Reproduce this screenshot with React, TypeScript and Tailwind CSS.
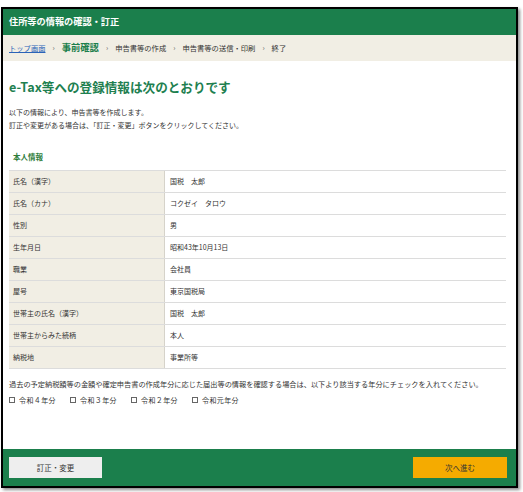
import React from "react";

const rows: [string, string][] = [
  ["氏名（漢字）", "国税　太郎"],
  ["氏名（カナ）", "コクゼイ　タロウ"],
  ["性別", "男"],
  ["生年月日", "昭和43年10月13日"],
  ["職業", "会社員"],
  ["屋号", "東京国税局"],
  ["世帯主の氏名（漢字）", "国税　太郎"],
  ["世帯主からみた続柄", "本人"],
  ["納税地", "事業所等"],
];

const years = ["令和４年分", "令和３年分", "令和２年分", "令和元年分"];

export default function App() {
  return (
    <div
      className="w-[523px] h-[492px] bg-white relative overflow-hidden"
      style={{ fontFamily: '"Noto Sans CJK JP", "Noto Sans", sans-serif' }}
    >
      <div className="ml-[1px] mt-[7px] w-[517px] h-[481px] border-2 border-black bg-white flex flex-col shadow-[2px_2px_3px_rgba(0,0,0,0.45)]">
        {/* Header */}
        <div className="h-[26px] shrink-0 bg-[#1b7f4c] flex items-center px-[6px] text-white text-[9.2px] font-bold">
          住所等の情報の確認・訂正
        </div>
        {/* Breadcrumb */}
        <div className="h-[26px] shrink-0 bg-[#f1eee4] flex items-center px-[6px] text-[7.3px] text-[#333]">
          <span className="text-[#2a63b8] underline">トップ画面</span>
          <span className="mx-[7px] text-[#666]">›</span>
          <span className="text-[9.3px] font-bold text-[#1b7f4c]">事前確認</span>
          <span className="mx-[7px] text-[#666]">›</span>
          <span>申告書等の作成</span>
          <span className="mx-[7px] text-[#666]">›</span>
          <span>申告書等の送信・印刷</span>
          <span className="mx-[7px] text-[#666]">›</span>
          <span>終了</span>
        </div>
        {/* Content */}
        <div className="flex-1 flex flex-col pl-[6px] pr-[10px]">
          <div className="mt-[18px] h-[16px] leading-[16px] text-[12.6px] font-bold text-[#1e8050] whitespace-nowrap">
            e-Tax等への登録情報は次のとおりです
          </div>
          <div className="mt-[11px] text-[7px] leading-[13px] text-[#333]">
            <div>以下の情報により、申告書等を作成します。</div>
            <div>訂正や変更がある場合は、「訂正・変更」ボタンをクリックしてください。</div>
          </div>
          <div className="mt-[19px] h-[12px] leading-[12px] text-[7.5px] font-bold text-[#2d7d3a] pl-[4px]">
            本人情報
          </div>
          <div className="mt-[7px] border-t border-[#dcdcdc]">
            {rows.map(([k, v]) => (
              <div key={k} className="flex h-[22px] border-b border-[#dcdcdc] text-[7px] text-[#333]">
                <div className="w-[156px] shrink-0 bg-[#f1eee4] border-r border-[#d6d3ca] flex items-center pl-[4px]">
                  {k}
                </div>
                <div className="flex-1 flex items-center pl-[5px] bg-white">{v}</div>
              </div>
            ))}
          </div>
          <div className="mt-[9px] h-[12px] leading-[12px] text-[7.2px] text-[#333] whitespace-nowrap">
            過去の予定納税額等の金額や確定申告書の作成年分に応じた届出等の情報を確認する場合は、以下より該当する年分にチェックを入れてください。
          </div>
          <div className="mt-[4px] h-[12px] flex items-center gap-[14px] text-[7px] text-[#333]">
            {years.map((y) => (
              <label key={y} className="flex items-center gap-[4px]">
                <span className="inline-block w-[6px] h-[6px] border border-[#666] bg-white" />
                <span className="tracking-[0.4px]">{y}</span>
              </label>
            ))}
          </div>
        </div>
        {/* Footer */}
        <div className="h-[37px] shrink-0 bg-[#1b7f4c] flex items-start justify-between pt-[8px] pl-[6px] pr-[9px]">
          <div className="w-[93px] h-[21px] bg-[#eeeeee] flex items-center justify-center text-[7.5px] text-[#333]">
            訂正・変更
          </div>
          <div className="w-[94px] h-[21px] bg-[#f5ab00] flex items-center justify-center text-[7.5px] text-[#333]">
            次へ進む
          </div>
        </div>
      </div>
    </div>
  );
}
